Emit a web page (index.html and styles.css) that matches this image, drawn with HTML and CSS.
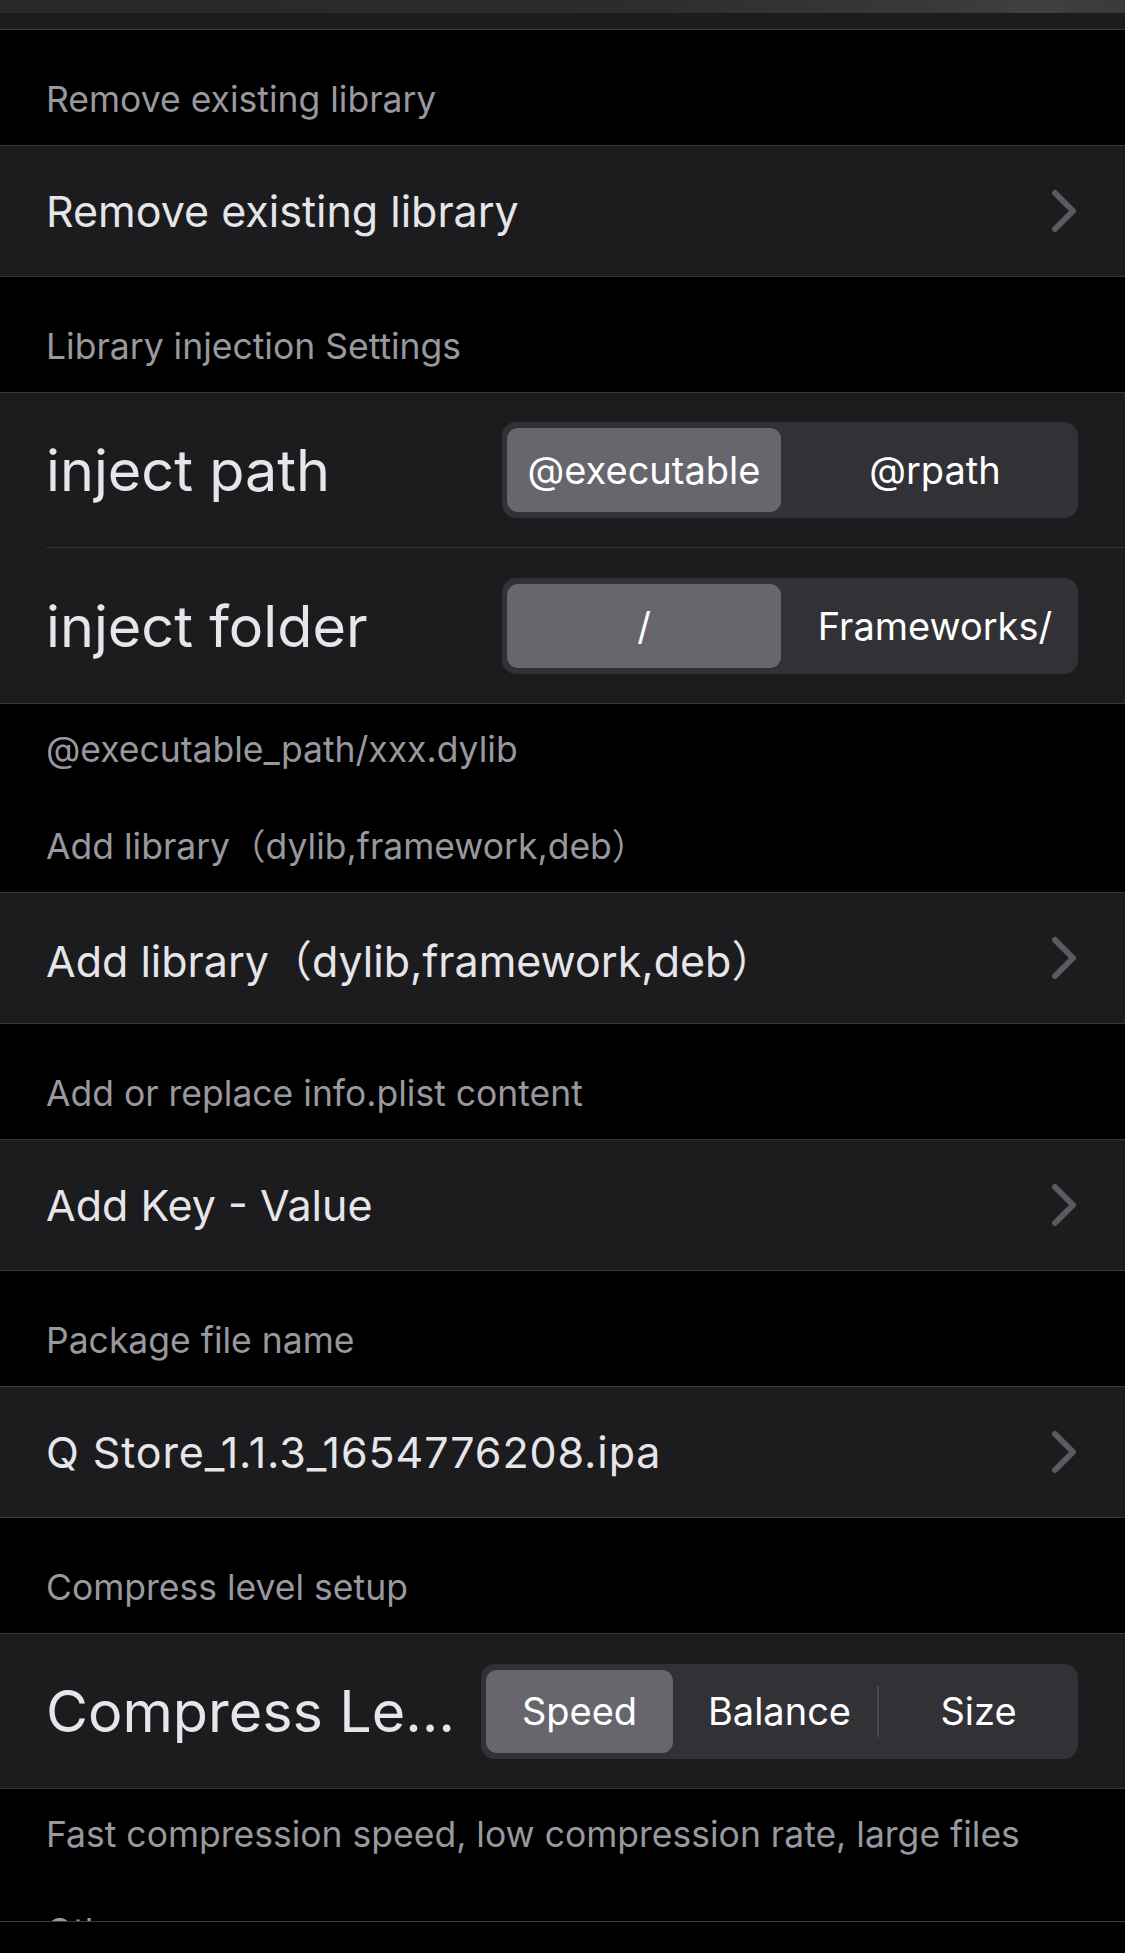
FILE: index.html
```html
<!DOCTYPE html>
<html lang="en">
<head>
<meta charset="utf-8">
<title>Settings</title>
<link rel="stylesheet" href="styles.css">
</head>
<body>
<div class="screen">
  <div class="topbar"></div>
  <div class="prev-cell"></div>

  <div class="header">Remove existing library</div>
  <div class="group">
    <div class="cell">
      <span class="cell-text">Remove existing library</span>
      <svg class="chevron" viewBox="0 0 26 44" width="26" height="44"><path d="M4 4 L22 22 L4 40"/></svg>
    </div>
  </div>

  <div class="header">Library injection Settings</div>
  <div class="group">
    <div class="seg-row">
      <span class="big-label">inject path</span>
      <div class="segmented two">
        <div class="seg selected">@executable</div>
        <div class="seg">@rpath</div>
      </div>
    </div>
    <div class="sep"></div>
    <div class="seg-row tall">
      <span class="big-label">inject folder</span>
      <div class="segmented two">
        <div class="seg selected">/</div>
        <div class="seg">Frameworks/</div>
      </div>
    </div>
  </div>
  <div class="footer">@executable_path/xxx.dylib</div>

  <div class="header">Add library（dylib,framework,deb）</div>
  <div class="group">
    <div class="cell">
      <span class="cell-text">Add library（dylib,framework,deb）</span>
      <svg class="chevron" viewBox="0 0 26 44" width="26" height="44"><path d="M4 4 L22 22 L4 40"/></svg>
    </div>
  </div>

  <div class="header">Add or replace info.plist content</div>
  <div class="group">
    <div class="cell">
      <span class="cell-text">Add Key - Value</span>
      <svg class="chevron" viewBox="0 0 26 44" width="26" height="44"><path d="M4 4 L22 22 L4 40"/></svg>
    </div>
  </div>

  <div class="header">Package file name</div>
  <div class="group">
    <div class="cell">
      <span class="cell-text filename">Q Store_1.1.3_1654776208.ipa</span>
      <svg class="chevron" viewBox="0 0 26 44" width="26" height="44"><path d="M4 4 L22 22 L4 40"/></svg>
    </div>
  </div>

  <div class="header">Compress level setup</div>
  <div class="group">
    <div class="seg-row">
      <span class="big-label">Compress Le…</span>
      <div class="segmented three">
        <div class="seg selected">Speed</div>
        <div class="seg">Balance</div>
        <div class="seg divided">Size</div>
      </div>
    </div>
  </div>
  <div class="footer">Fast compression speed, low compression rate, large files</div>

  <div class="header">Other</div>

  <div class="bottombar"></div>
</div>
</body>
</html>
```

FILE: styles.css
```css
html, body {
  margin: 0;
  padding: 0;
  background: #000;
}

.screen {
  position: relative;
  width: 1125px;
  height: 1953px;
  overflow: hidden;
  background: #000;
  font-family: "Inter", "Noto Sans CJK SC", sans-serif;
  color: #e5e5ea;
}

.topbar {
  height: 13px;
  background: linear-gradient(90deg, #28282a 0%, #2c2c2e 55%, #3a3a3c 85%, #404042 92%, #3a3a3c 100%);
}

.prev-cell {
  height: 16px;
  background: #1c1c1e;
  border-bottom: 1px solid #38383a;
}

.header {
  height: 115px;
  box-sizing: border-box;
  padding: 52px 46px 27px;
  font-size: 35.5px;
  line-height: 36px;
  color: #98989e;
  white-space: nowrap;
}

.footer {
  height: 73px;
  box-sizing: border-box;
  padding: 28px 46px 9px;
  font-size: 35.5px;
  line-height: 36px;
  color: #98989e;
  white-space: nowrap;
}

.group {
  background: #1c1c1e;
  border-top: 1px solid #38383a;
  border-bottom: 1px solid #38383a;
}

.cell {
  height: 130px;
  display: flex;
  align-items: center;
  justify-content: space-between;
  padding: 0 48px 0 46px;
}

.cell-text {
  font-size: 43px;
  color: #e5e5ea;
  white-space: nowrap;
}

.cell-text.filename {
  letter-spacing: 0.9px;
}

.chevron {
  display: block;
  fill: none;
  stroke: #5a5a5f;
  stroke-width: 6;
  stroke-linecap: round;
  stroke-linejoin: round;
}

.sep {
  height: 1px;
  margin-left: 46px;
  background: #313134;
}

.seg-row {
  height: 154px;
  display: flex;
  align-items: center;
  justify-content: space-between;
  padding: 0 47px 0 46px;
}

.seg-row.tall {
  height: 155px;
}

.big-label {
  font-size: 57.5px;
  color: #e5e5ea;
  white-space: nowrap;
}

.segmented {
  display: grid;
  box-sizing: border-box;
  padding: 6px 6px;
  background: #323236;
  border-radius: 14px;
  color: #fff;
  font-size: 38px;
}

.segmented.two {
  width: 576px;
  height: 96px;
  grid-template-columns: 1fr 1fr;
}

.segmented.three {
  width: 597px;
  height: 95px;
  grid-template-columns: 1fr 1fr 1fr;
}

.seg {
  display: flex;
  align-items: center;
  justify-content: center;
  white-space: nowrap;
  border-radius: 11px;
}

.segmented.two .seg:not(.selected) {
  padding-left: 8px;
}

.seg.selected {
  background: #67666c;
  margin-right: 9px;
  margin-left: -1px;
}

.seg.divided {
  border-left: 2px solid #4a4a4e;
  border-radius: 0;
  margin: 16px 0;
  padding-left: 6px;
}

.bottombar {
  position: absolute;
  left: 0;
  right: 0;
  bottom: 0;
  height: 31px;
  background: #000;
  border-top: 1px solid #3c3c3e;
}
```
